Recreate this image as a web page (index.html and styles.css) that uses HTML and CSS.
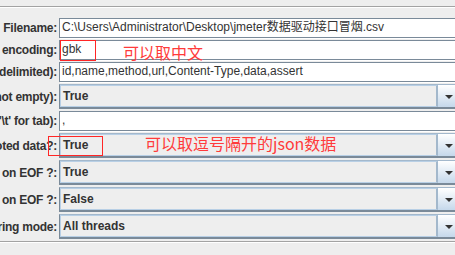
FILE: index.html
```html
<!DOCTYPE html>
<html lang="en">
<head>
    <meta charset="UTF-8">
    <title>CSV Data Set Config</title>
    <link rel="stylesheet" href="styles.css">
</head>
<body>
    <div class="top-rule"></div>

    <div class="form">
        <div class="row">
            <div class="label"><span>Filename:</span></div>
            <div class="text-field">C:\Users\Administrator\Desktop\jmeter数据驱动接口冒烟.csv</div>
        </div>
        <div class="row">
            <div class="label"><span>File encoding:</span></div>
            <div class="text-field">gbk</div>
            <div class="note-box box-gbk"></div>
            <div class="note note-gbk">可以取中文</div>
        </div>
        <div class="row">
            <div class="label"><span>Variable Names (comma-delimited):</span></div>
            <div class="text-field">id,name,method,url,Content-Type,data,assert</div>
        </div>
        <div class="row">
            <div class="label"><span>Ignore first line (only used if Variable Names is not empty):</span></div>
            <div class="combo">
                <div class="combo-value">True</div>
                <div class="combo-arrow"><i></i></div>
            </div>
        </div>
        <div class="row">
            <div class="label"><span>Delimiter (use '\t' for tab):</span></div>
            <div class="text-field">,</div>
        </div>
        <div class="row">
            <div class="label"><span>Allow quoted data?:</span></div>
            <div class="combo">
                <div class="combo-value">True</div>
                <div class="combo-arrow"><i></i></div>
            </div>
            <div class="note-box box-quoted"></div>
            <div class="note note-quoted">可以取逗号隔开的json数据</div>
        </div>
        <div class="row">
            <div class="label"><span>Recycle on EOF ?:</span></div>
            <div class="combo">
                <div class="combo-value">True</div>
                <div class="combo-arrow"><i></i></div>
            </div>
        </div>
        <div class="row">
            <div class="label"><span>Stop thread on EOF ?:</span></div>
            <div class="combo">
                <div class="combo-value">False</div>
                <div class="combo-arrow"><i></i></div>
            </div>
        </div>
        <div class="row">
            <div class="label"><span>Sharing mode:</span></div>
            <div class="combo">
                <div class="combo-value">All threads</div>
                <div class="combo-arrow"><i></i></div>
            </div>
        </div>
    </div>

    <div class="bottom-rule"></div>
</body>
</html>
```

FILE: styles.css
```css
* {
    margin: 0;
    padding: 0;
    box-sizing: border-box;
}

body {
    background-color: #eeeeee;
    font-family: 'Liberation Sans', 'Noto Sans CJK SC', sans-serif;
    font-size: 12px;
    color: #333333;
    overflow: hidden;
    width: 455px;
    height: 255px;
}

.top-rule {
    margin-top: 6px;
    height: 2px;
    border-top: 1px solid #a3a3a3;
    border-bottom: 1px solid #ffffff;
}

.form {
    width: 462px;
    padding-top: 10px;
    display: flex;
    flex-direction: column;
    gap: 2px;
}

.row {
    display: flex;
    align-items: stretch;
    position: relative;
}

.label {
    width: 57px;
    margin-right: 2px;
    display: flex;
    justify-content: flex-end;
    align-items: center;
    overflow: hidden;
    flex-shrink: 0;
}

.label span {
    white-space: nowrap;
    font-weight: bold;
    letter-spacing: -0.25px;
    color: #333333;
}

.text-field {
    flex: 1;
    height: 20px;
    line-height: 17px;
    padding-left: 2px;
    background-color: #ffffff;
    border: 1px solid #7a8a99;
    box-shadow: 1px 1px 0 #ffffff;
    white-space: nowrap;
    overflow: hidden;
}

.combo {
    flex: 1;
    height: 25px;
    display: flex;
    border: 1px solid #7a8a99;
    border-top-color: #a3b8cc;
    border-bottom-width: 2px;
}

.combo-value {
    width: 378px;
    padding-left: 2px;
    line-height: 21px;
    font-weight: bold;
    background-color: #eeeeee;
    border: 1px solid #b8cfe5;
    border-right: 2px solid #a3b8cc;
}

.combo-arrow {
    flex: 1;
    background: linear-gradient(#ffffff, #c5d8eb);
    display: flex;
    align-items: center;
    padding-left: 7px;
    padding-top: 1px;
}

.combo-arrow i {
    width: 0;
    height: 0;
    border-left: 4px solid transparent;
    border-right: 4px solid transparent;
    border-top: 4px solid #333333;
}

.note-box {
    position: absolute;
    border: 1px solid #ff2626;
}

.box-gbk {
    left: 60px;
    top: 0;
    width: 36px;
    height: 21px;
}

.box-quoted {
    left: 48px;
    top: 3px;
    width: 55px;
    height: 20px;
}

.note {
    position: absolute;
    color: #ff3b3b;
    font-family: 'Noto Sans CJK SC', sans-serif;
    font-size: 16px;
    line-height: 18px;
    white-space: nowrap;
}

.note-gbk {
    left: 123px;
    top: 3px;
}

.note-quoted {
    left: 145px;
    top: 1px;
}

.bottom-rule {
    margin-top: 2px;
    height: 2px;
    border-top: 1px solid #a3a3a3;
    border-bottom: 1px solid #ffffff;
}
```
